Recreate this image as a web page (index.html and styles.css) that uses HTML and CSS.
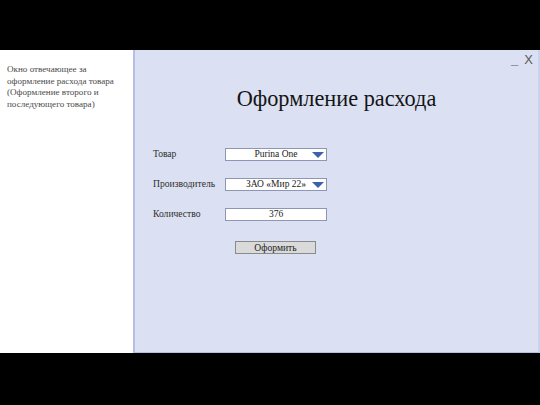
FILE: index.html
```html
<!DOCTYPE html>
<html lang="ru">
<head>
<meta charset="utf-8">
<link rel="stylesheet" href="styles.css">
</head>
<body>
<div class="screen">
  <div class="bar-top"></div>
  <div class="main">
    <aside class="note">Окно отвечающее за оформление расхода товара (Оформление второго и последующего товара)</aside>
    <section class="window">
      <div class="win-controls"><span class="min">_</span><span class="close">X</span></div>
      <h1 class="title">Оформление расхода</h1>
      <div class="form">
        <div class="row">
          <span class="label">Товар</span>
          <div class="field select"><span></span><span class="val">Purina One</span><svg class="arrow" width="12" height="6" viewBox="0 0 12 6"><polygon points="0,0 12,0 6,6" fill="#3a62ad"/></svg></div>
        </div>
        <div class="row">
          <span class="label">Производитель</span>
          <div class="field select"><span></span><span class="val">ЗАО «Мир 22»</span><svg class="arrow" width="12" height="6" viewBox="0 0 12 6"><polygon points="0,0 12,0 6,6" fill="#3a62ad"/></svg></div>
        </div>
        <div class="row">
          <span class="label">Количество</span>
          <div class="field"><span class="val">376</span></div>
        </div>
        <div class="row row-btn">
          <span class="label"></span>
          <button class="btn">Оформить</button>
        </div>
      </div>
    </section>
  </div>
  <div class="bar-bottom"></div>
</div>
</body>
</html>
```
FILE: styles.css
```css
html, body {
  margin: 0;
  padding: 0;
  background: #000;
}
.screen {
  width: 540px;
  height: 405px;
  display: flex;
  flex-direction: column;
  font-family: "Liberation Serif", "Times New Roman", "DejaVu Serif", serif;
}
.bar-top {
  height: 50px;
  background: #000;
}
.main {
  height: 303px;
  display: flex;
}
.bar-bottom {
  flex: 1;
  background: #000;
}
.note {
  width: 126px;
  background: #fff;
  padding: 14px 0 0 7px;
  font-family: "Liberation Serif", "Times New Roman", "DejaVu Serif", serif;
  font-size: 9.1px;
  line-height: 11.6px;
  color: #4a4a4a;
}
.window {
  flex: 1;
  background: #dbe1f2;
  border-left: 2px solid #b3bfe4;
  border-right: 2px solid #c9d2ee;
  border-bottom: 1px solid #b3bfe4;
  display: flex;
  flex-direction: column;
}
.win-controls {
  display: flex;
  justify-content: flex-end;
  gap: 6px;
  padding: 3px 5px 0 0;
  height: 14px;
  font-family: "Liberation Sans", Arial, sans-serif;
  font-size: 13px;
  line-height: 14px;
  color: #5a5a5a;
}
.win-controls .min {
  font-weight: bold;
}
.title {
  margin: 19px 0 0 0;
  text-align: center;
  font-family: "Liberation Serif", "Times New Roman", "DejaVu Serif", serif;
  font-weight: normal;
  font-size: 22.3px;
  line-height: 26px;
  color: #141414;
}
.form {
  margin: 36px 0 0 18px;
  display: flex;
  flex-direction: column;
  gap: 16px;
}
.row {
  display: flex;
  align-items: center;
  height: 13px;
}
.row + .row {
  margin-top: 1px;
}
.row-btn {
  margin-top: 4px !important;
}
.label {
  width: 72px;
  font-family: "Liberation Serif", "Times New Roman", "DejaVu Serif", serif;
  font-size: 9.6px;
  color: #2e2e2e;
  margin-top: -3px;
}
.field {
  width: 102px;
  height: 13px;
  box-sizing: border-box;
  background: #fff;
  border: 1px solid #8d96b4;
  display: grid;
  grid-template-columns: 14px 1fr 14px;
  align-items: center;
  font-family: "Liberation Serif", "Times New Roman", "DejaVu Serif", serif;
  font-size: 9.5px;
  line-height: 11px;
  color: #222;
}
.field .val {
  grid-column: 2;
  text-align: center;
  white-space: nowrap;
}
.arrow {
  grid-column: 3;
  display: block;
}
.btn {
  margin-left: 10px;
  width: 81px;
  height: 13px;
  box-sizing: border-box;
  padding: 0;
  background: #dadada;
  border: 1px solid #8a8a8a;
  font-family: "Liberation Serif", "Times New Roman", "DejaVu Serif", serif;
  font-size: 9.6px;
  line-height: 11px;
  color: #222;
}
```
